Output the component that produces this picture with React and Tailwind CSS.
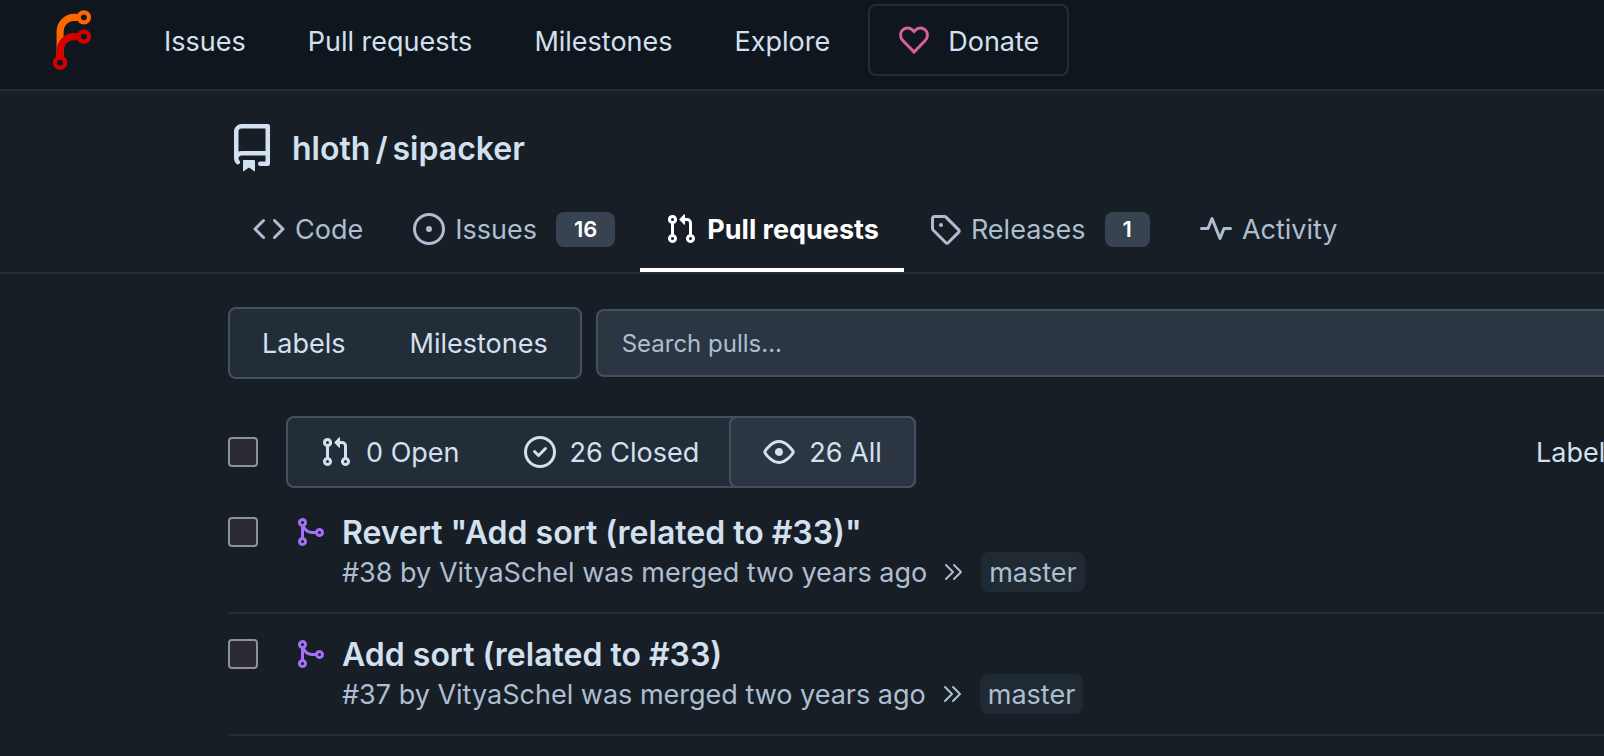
const octicons = {
  code: "m11.28 3.22 4.25 4.25a.75.75 0 0 1 0 1.06l-4.25 4.25a.749.749 0 0 1-1.275-.326.749.749 0 0 1 .215-.734L13.94 8l-3.72-3.72a.749.749 0 0 1 .326-1.275.749.749 0 0 1 .734.215Zm-6.56 0a.751.751 0 0 1 1.042.018.751.751 0 0 1 .018 1.042L2.06 8l3.72 3.72a.749.749 0 0 1-.326 1.275.749.749 0 0 1-.734-.215L.47 8.53a.75.75 0 0 1 0-1.06Z",
  issue: "M8 9.5a1.5 1.5 0 1 0 0-3 1.5 1.5 0 0 0 0 3ZM8 0a8 8 0 1 1 0 16A8 8 0 0 1 8 0ZM1.5 8a6.5 6.5 0 1 0 13 0 6.5 6.5 0 0 0-13 0Z",
  pull: "M1.5 3.25a2.25 2.25 0 1 1 3 2.122v5.256a2.251 2.251 0 1 1-1.5 0V5.372A2.25 2.25 0 0 1 1.5 3.25Zm5.677-.177L9.573.677A.25.25 0 0 1 10 .854V2.5h1A2.5 2.5 0 0 1 13.5 5v5.628a2.251 2.251 0 1 1-1.5 0V5a1 1 0 0 0-1-1h-1v1.646a.25.25 0 0 1-.427.177L7.177 3.427a.25.25 0 0 1 0-.354ZM3.75 2.5a.75.75 0 1 0 0 1.5.75.75 0 0 0 0-1.5Zm0 9.5a.75.75 0 1 0 0 1.5.75.75 0 0 0 0-1.5Zm8.25.75a.75.75 0 1 0 1.5 0 .75.75 0 0 0-1.5 0Z",
  tag: "M1 7.775V2.75C1 1.784 1.784 1 2.75 1h5.025c.464 0 .91.184 1.238.513l6.25 6.25a1.75 1.75 0 0 1 0 2.474l-5.026 5.026a1.75 1.75 0 0 1-2.474 0l-6.25-6.25A1.752 1.752 0 0 1 1 7.775Zm1.5 0c0 .066.026.13.073.177l6.25 6.25a.25.25 0 0 0 .354 0l5.025-5.025a.25.25 0 0 0 0-.354l-6.25-6.25a.25.25 0 0 0-.177-.073H2.75a.25.25 0 0 0-.25.25ZM6 5a1 1 0 1 1 0 2 1 1 0 0 1 0-2Z",
  pulse: "M6 2c.306 0 .582.187.696.471L10 10.731l1.304-3.26A.751.751 0 0 1 12 7h3.25a.75.75 0 0 1 0 1.5h-2.742l-1.812 4.528a.751.751 0 0 1-1.392 0L6 4.77 4.696 8.03A.75.75 0 0 1 4 8.5H.75a.75.75 0 0 1 0-1.5h2.742l1.812-4.529A.751.751 0 0 1 6 2Z",
  repo: "M2 2.5A2.5 2.5 0 0 1 4.5 0h8.75a.75.75 0 0 1 .75.75v12.5a.75.75 0 0 1-.75.75h-2.5a.75.75 0 0 1 0-1.5h1.75v-2h-8a1 1 0 0 0-.714 1.7.75.75 0 1 1-1.072 1.05A2.495 2.495 0 0 1 2 11.5Zm10.5-1h-8a1 1 0 0 0-1 1v6.708A2.486 2.486 0 0 1 4.5 9h8ZM5 12.25a.25.25 0 0 1 .25-.25h3.5a.25.25 0 0 1 .25.25v3.25a.25.25 0 0 1-.4.2l-1.45-1.087a.249.249 0 0 0-.3 0L5.4 15.7a.25.25 0 0 1-.4-.2Z",
  closed: "M0 8a8 8 0 1 1 16 0A8 8 0 0 1 0 8Zm1.5 0a6.5 6.5 0 1 0 13 0 6.5 6.5 0 0 0-13 0Zm9.78-1.22-3.5 3.5a.75.75 0 0 1-1.06 0l-2-2a.751.751 0 0 1 .018-1.042.751.751 0 0 1 1.042-.018l1.47 1.47 2.97-2.97a.751.751 0 0 1 1.042.018.751.751 0 0 1 .018 1.042Z",
  eye: "M8 2c1.981 0 3.671.992 4.933 2.078 1.27 1.091 2.187 2.345 2.637 3.023a1.62 1.62 0 0 1 0 1.798c-.45.678-1.367 1.932-2.637 3.023C11.67 13.008 9.981 14 8 14s-3.671-.992-4.933-2.078C1.797 10.83.88 9.576.43 8.898a1.62 1.62 0 0 1 0-1.798c.45-.677 1.367-1.931 2.637-3.022C4.33 2.992 6.019 2 8 2ZM1.679 7.932a.12.12 0 0 0 0 .136c.411.622 1.241 1.75 2.366 2.717C5.176 11.758 6.527 12.5 8 12.5s2.825-.742 3.955-1.715c1.124-.967 1.954-2.096 2.366-2.717a.12.12 0 0 0 0-.136c-.412-.621-1.242-1.75-2.366-2.717C10.824 4.242 9.473 3.5 8 3.5s-2.824.742-3.955 1.715c-1.124.967-1.954 2.096-2.366 2.717ZM8 10a2 2 0 1 1-.001-3.999A2 2 0 0 1 8 10Z",
  merge: "M5.45 5.154A4.25 4.25 0 0 0 9.25 7.5h1.378a2.251 2.251 0 1 1 0 1.5H9.25A5.734 5.734 0 0 1 5 7.123v3.505a2.25 2.25 0 1 1-1.5 0V5.372a2.25 2.25 0 1 1 1.95-.218ZM4.25 13.5a.75.75 0 1 0 0-1.5.75.75 0 0 0 0 1.5Zm8.5-4.5a.75.75 0 1 0 0-1.5.75.75 0 0 0 0 1.5ZM5 3.25a.75.75 0 1 0-1.5 0 .75.75 0 0 0 1.5 0Z",
};

const Icon = ({ name, className = "size-8" }) => (
  <svg className={`shrink-0 ${className}`} viewBox="0 0 16 16" fill="currentColor" aria-hidden="true">
    <path d={octicons[name]} />
  </svg>
);

const Logo = () => (
  <svg className="size-[60px]" viewBox="0 0 212 212" fill="none" aria-hidden="true">
    <g transform="translate(6 6)">
      <path d="M58 168V70a50 50 0 0 1 50-50h20" stroke="#ff6600" strokeWidth="25" />
      <path d="M58 168v-30a50 50 0 0 1 50-50h20" stroke="#d40000" strokeWidth="25" />
      <circle cx="142" cy="20" r="18" stroke="#ff6600" strokeWidth="15" />
      <circle cx="142" cy="88" r="18" stroke="#d40000" strokeWidth="15" />
      <circle cx="58" cy="180" r="18" stroke="#d40000" strokeWidth="15" />
    </g>
  </svg>
);

const Heart = () => (
  <svg className="size-8" viewBox="0 0 32 32" fill="none" stroke="#d6619b" strokeWidth="3" aria-hidden="true">
    <path d="M16 28L5 16.8C1.8 13.4 1.8 8.8 4.6 6C7.6 3.2 12.2 3.4 15 6.4L16 7.5L17 6.4C19.8 3.4 24.4 3.2 27.4 6C30.2 8.8 30.2 13.4 27 16.8Z" />
  </svg>
);

const DoubleChevron = () => (
  <svg
    className="size-6 shrink-0"
    viewBox="0 0 24 24"
    fill="none"
    stroke="currentColor"
    strokeWidth="2"
    strokeLinecap="round"
    strokeLinejoin="round"
    aria-hidden="true"
  >
    <path d="M4 5l7 7-7 7M12 5l7 7-7 7" />
  </svg>
);

const navLinks = ["Issues", "Pull requests", "Milestones", "Explore"];

const tabs = [
  { label: "Code", icon: "code" },
  { label: "Issues", icon: "issue", count: 16 },
  { label: "Pull requests", icon: "pull", active: true },
  { label: "Releases", icon: "tag", count: 1 },
  { label: "Activity", icon: "pulse" },
];

const pulls = [
  { id: 38, title: 'Revert "Add sort (related to #33)"' },
  { id: 37, title: "Add sort (related to #33)" },
];

const Checkbox = ({ label }) => (
  <input
    type="checkbox"
    aria-label={label}
    className="size-[30px] shrink-0 appearance-none rounded-sm border-2 border-[#8f8f9d] bg-[#2b2a33]"
  />
);

const Navbar = () => (
  <nav className="flex items-center border-b-2 border-[#242d38] bg-[#10161d] pt-1 pb-[13px] pl-[42px]">
    <a href="#home" aria-label="Home" className="mr-[31px]">
      <Logo />
    </a>
    {navLinks.map((label) => (
      <a key={label} href="#nav" className="px-[31px] pt-1">
        {label}
      </a>
    ))}
    <a
      href="#donate"
      className="ml-[7px] flex h-[72px] items-center gap-[18px] rounded-lg border-2 border-[#242d38] px-7"
    >
      <Heart />
      <span className="pt-1">Donate</span>
    </a>
  </nav>
);

const RepoHeader = () => (
  <header className="border-b-2 border-[#242d38] pt-[33px] pl-[228px]">
    <div className="flex h-12 items-center gap-4">
      <Icon name="repo" className="size-12" />
      <h1 className="flex gap-[5px] pt-0.5 text-[32px] font-semibold">
        <a href="#owner">hloth</a>
        <span>/</span>
        <a href="#repo">sipacker</a>
      </h1>
    </div>
    <div className="mt-[14px] flex">
      {tabs.map(({ label, icon, count, active }) => (
        <a
          key={label}
          href="#tab"
          className={`flex h-[86px] items-center border-b-4 px-[25px] pt-1 ${
            active ? "border-white font-bold text-white" : "border-transparent text-[#aebed0]"
          }`}
        >
          <Icon name={icon} />
          <span className="ml-[10px] pt-0.5">{label}</span>
          {count && (
            <span className="ml-[19px] rounded-lg bg-[#374351] px-[18px] text-[22px] leading-[35px] font-semibold text-white">
              {count}
            </span>
          )}
        </a>
      ))}
    </div>
  </header>
);

const Pull = ({ id, title }) => (
  <li className="flex border-b-2 border-[#242d38] py-5">
    <div className="flex h-10 items-center">
      <Checkbox label={`Select pull request #${id}`} />
      <Icon name="merge" className="ml-9 size-8 text-[#a371f7]" />
    </div>
    <div className="ml-4">
      <a href="#pull" className="block h-10 pt-0.5 text-[32px] leading-[38px] font-semibold">
        {title}
      </a>
      <div className="flex h-10 items-center text-[#aebed0]">
        <span className="pt-0.5">
          #{id} by <a href="#user">VityaSchel</a> was merged two years ago
        </span>
        <span className="mx-[15px]">
          <DoubleChevron />
        </span>
        <a href="#branch" className="rounded-lg bg-[#202a33] px-2 pt-0.5 leading-[38px]">
          master
        </a>
      </div>
    </div>
  </li>
);

export default function App() {
  return (
    <div className="min-h-screen overflow-hidden bg-[#171e26] font-['Inter',sans-serif] text-[27px] leading-10 whitespace-nowrap text-[#d2e0f0]">
      <Navbar />
      <RepoHeader />
      <main className="-mr-12 pt-[33px] pl-[228px]">
        <div className="flex items-center gap-[14px]">
          <div className="flex h-[72px] items-center rounded-lg border-2 border-[#445161] bg-[#232d37]">
            <a href="#labels" className="px-8 pt-0.5">
              Labels
            </a>
            <a href="#milestones" className="px-8 pt-0.5">
              Milestones
            </a>
          </div>
          <input
            type="search"
            aria-label="Search pulls"
            placeholder="Search pulls..."
            className="h-[68px] min-w-0 flex-1 rounded-lg border-2 border-[#445161] bg-[#2b3642] px-6 text-[24px] placeholder:text-[#aebed0]"
          />
        </div>

        <div className="mt-[37px] flex items-center">
          <Checkbox label="Select all pull requests" />
          <div className="ml-7 flex h-[72px] rounded-lg border-2 border-[#445161] bg-[#232d37]">
            <a href="#open" className="flex items-center gap-[14px] px-8">
              <Icon name="pull" />
              <span className="pt-0.5">0 Open</span>
            </a>
            <a href="#closed" className="flex items-center gap-[14px] px-8">
              <Icon name="closed" />
              <span className="pt-0.5">26 Closed</span>
            </a>
            <a
              href="#all"
              className="-m-0.5 flex items-center gap-[14px] rounded-lg border-2 border-[#445161] bg-[#2b3642] px-8"
            >
              <Icon name="eye" />
              <span className="pt-0.5">26 All</span>
            </a>
          </div>
          <button type="button" className="ml-auto w-[116px] pt-0.5 text-left">
            Label
          </button>
        </div>

        <ul className="mt-1">
          {pulls.map((pull) => (
            <Pull key={pull.id} {...pull} />
          ))}
        </ul>
      </main>
    </div>
  );
}
